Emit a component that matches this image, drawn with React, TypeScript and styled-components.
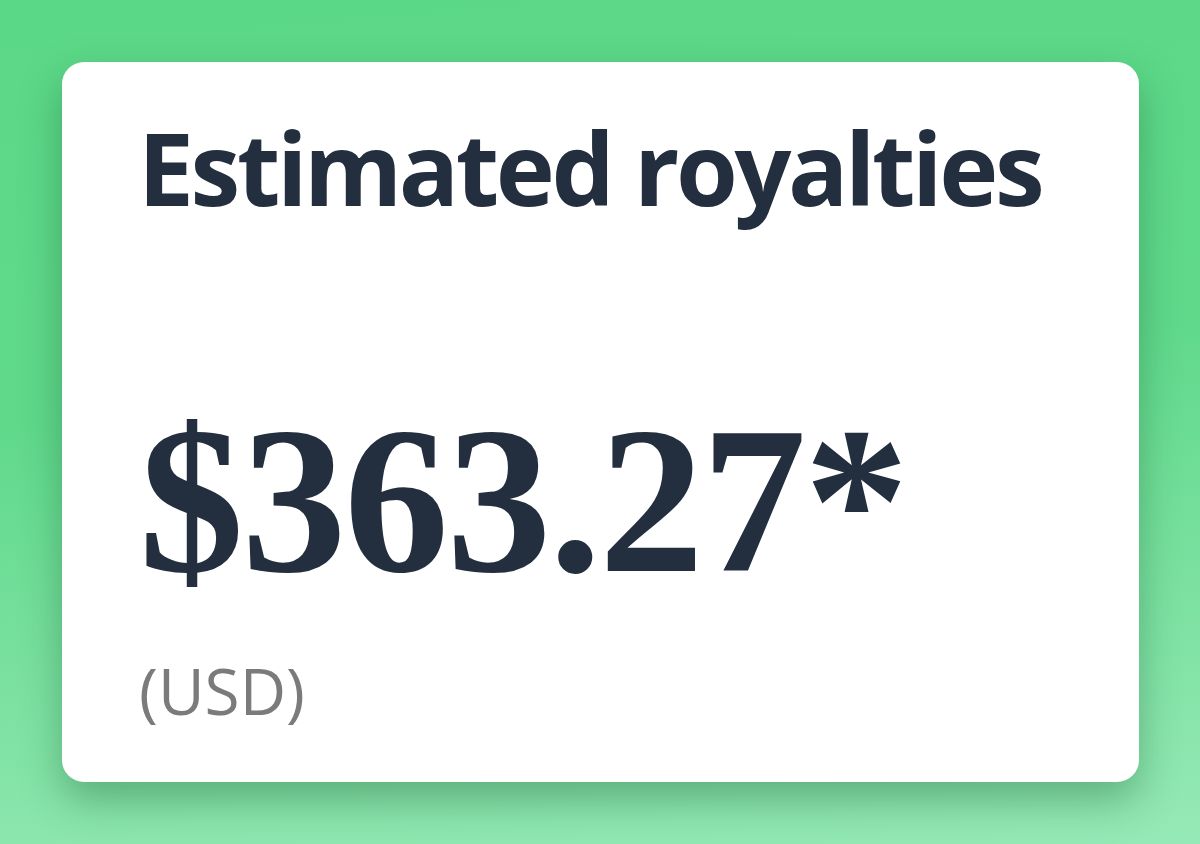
import React from "react";
import styled, { createGlobalStyle } from "styled-components";

const GlobalStyle = createGlobalStyle`
  html, body {
    margin: 0;
    padding: 0;
  }
  body {
    font-family: "Open Sans", "Noto Sans", sans-serif;
  }
`;

const Page = styled.div`
  width: 1200px;
  height: 844px;
  box-sizing: border-box;
  padding: 62px 61px 0 62px;
  background: linear-gradient(175deg, #5bd887 0%, #60d98b 45%, #96e9b6 100%);
  overflow: hidden;
`;

const Card = styled.section`
  width: 1077px;
  height: 720px;
  box-sizing: border-box;
  padding: 55px 0 0 77px;
  background: #ffffff;
  border-radius: 22px;
  box-shadow: 0 18px 40px rgba(20, 90, 45, 0.38);
  display: flex;
  flex-direction: column;
  color: #232f3e;
`;

const Title = styled.h2`
  margin: 0 0 0 -1px;
  font-family: "Open Sans", sans-serif;
  font-weight: 700;
  font-size: 100px;
  line-height: 1;
  letter-spacing: -3.4px;
`;

const Amount = styled.div`
  margin: 178px 0 0 0;
  font-family: "Liberation Serif", serif;
  font-weight: 700;
  font-size: 210px;
  line-height: 1;
  letter-spacing: -2.5px;
`;

const Currency = styled.div`
  margin-top: 54px;
  font-family: "Open Sans", sans-serif;
  font-weight: 400;
  font-size: 64px;
  line-height: 1;
  color: #7b7b7b;
`;

export default function App() {
  return (
    <>
      <GlobalStyle />
      <Page>
        <Card>
          <Title>Estimated royalties</Title>
          <Amount>$363.27*</Amount>
          <Currency>(USD)</Currency>
        </Card>
      </Page>
    </>
  );
}
